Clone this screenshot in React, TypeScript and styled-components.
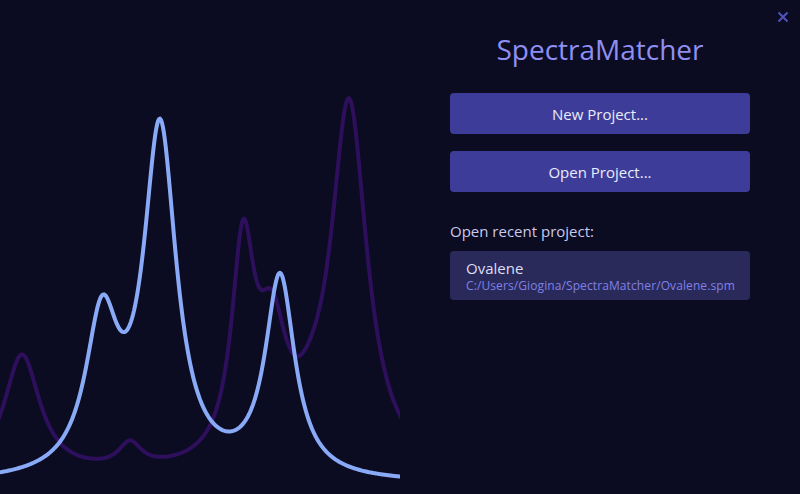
import React from "react";
import styled, { createGlobalStyle } from "styled-components";

const Global = createGlobalStyle`
  html, body { margin: 0; padding: 0; background: #0b0b22; }
  body { font-family: "Open Sans", "Noto Sans", sans-serif; }
`;

const Window = styled.div`
  position: relative;
  width: 800px;
  height: 494px;
  background: #0b0b22;
  display: grid;
  grid-template-columns: 400px 400px;
  overflow: hidden;
`;

const ChartPane = styled.div`
  width: 400px;
  height: 494px;
  overflow: hidden;
`;

const Side = styled.div`
  display: flex;
  flex-direction: column;
  padding: 32px 50px 0 50px;
`;

const Title = styled.h1`
  margin: 0 0 27px 0;
  font-size: 28px;
  line-height: 34px;
  font-weight: 400;
  color: #8f8ff2;
  text-align: center;
`;

const Button = styled.button<{ $gap?: number }>`
  height: 41px;
  width: 300px;
  margin: 0 0 ${(p) => p.$gap ?? 0}px 0;
  border: none;
  border-radius: 4px;
  background: #3d3d99;
  color: #ececfa;
  font-family: inherit;
  font-size: 15px;
  cursor: pointer;
`;

const Label = styled.div`
  margin-top: 29px;
  font-size: 15px;
  line-height: 20px;
  color: #c9c9ea;
`;

const RecentCard = styled.div`
  margin-top: 10px;
  width: 300px;
  height: 49px;
  box-sizing: border-box;
  padding: 8px 16px 7px 16px;
  border-radius: 4px;
  background: #2a2a5a;
  display: flex;
  flex-direction: column;
`;

const RecentName = styled.div`
  font-size: 15px;
  line-height: 18px;
  color: #dedef4;
`;

const RecentPath = styled.div`
  margin-top: 2px;
  font-size: 12px;
  line-height: 14px;
  letter-spacing: 0.1px;
  color: #8080e6;
  white-space: nowrap;
`;

const Close = styled.div`
  position: absolute;
  top: 11px;
  right: 11px;
  width: 12px;
  height: 12px;
  display: flex;
  align-items: center;
  justify-content: center;
`;

type Peak = [number, number, number]; // x0, amplitude, gamma

const lor = (x: number, peaks: Peak[]) =>
  peaks.reduce((s, [x0, a, g]) => s + (a * g * g) / ((x - x0) * (x - x0) + g * g), 0);

const buildPath = (base: number, peaks: Peak[]) => {
  let d = "";
  for (let x = -4; x <= 404; x += 1) {
    const y = base - lor(x, peaks);
    d += (x === -4 ? "M" : "L") + x + " " + y.toFixed(2) + " ";
  }
  return d;
};

const bluePeaks: Peak[] = [
  [102, 150, 20],
  [160, 345, 20],
  [280, 200, 18],
];

const darkPeaks: Peak[] = [
  [22, 120, 22],
  [130, 24, 14],
  [243, 208, 14],
  [272, 116, 18],
  [312, 20, 20],
  [349, 365, 22],
];

const Spectra = () => (
  <svg width="400" height="494" viewBox="0 0 400 494">
    <path d={buildPath(478, darkPeaks)} fill="none" stroke="#2d0f5c" strokeWidth="4" strokeLinejoin="round" />
    <path d={buildPath(484, bluePeaks)} fill="none" stroke="#89abf7" strokeWidth="4" strokeLinejoin="round" />
  </svg>
);

export default function App() {
  return (
    <>
      <Global />
      <Window>
        <ChartPane>
          <Spectra />
        </ChartPane>
        <Side>
          <Title>SpectraMatcher</Title>
          <Button $gap={17}>New Project...</Button>
          <Button>Open Project...</Button>
          <Label>Open recent project:</Label>
          <RecentCard>
            <RecentName>Ovalene</RecentName>
            <RecentPath>C:/Users/Giogina/SpectraMatcher/Ovalene.spm</RecentPath>
          </RecentCard>
        </Side>
        <Close>
          <svg width="12" height="12" viewBox="0 0 12 12">
            <path d="M1.5 1.5 L10.5 10.5 M10.5 1.5 L1.5 10.5" stroke="#5252bd" strokeWidth="2" />
          </svg>
        </Close>
      </Window>
    </>
  );
}
